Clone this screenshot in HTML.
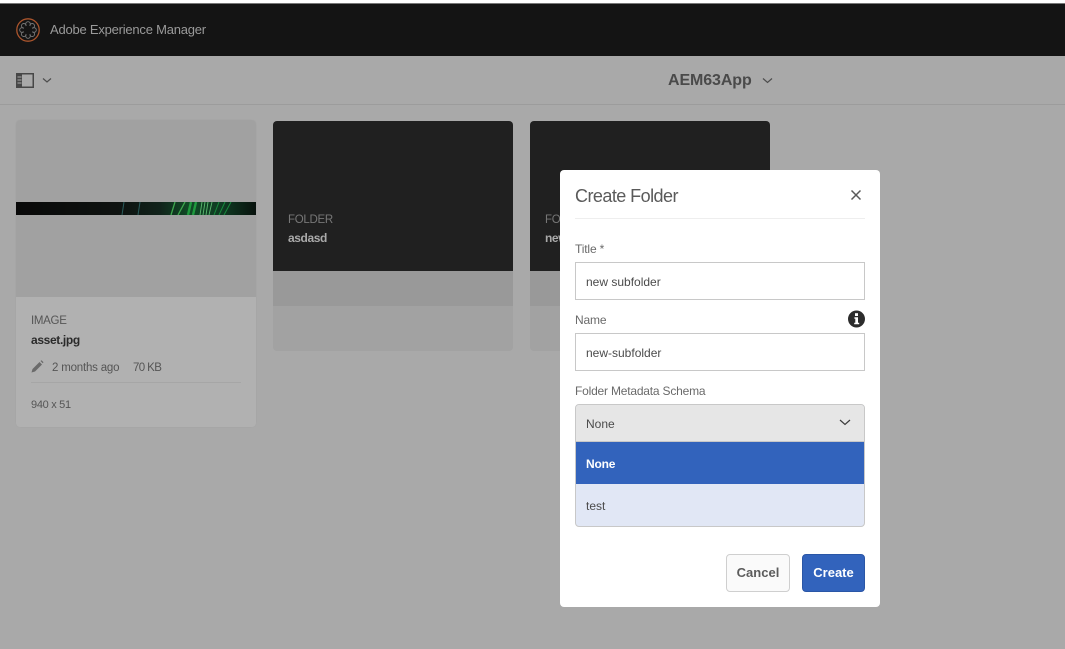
<!DOCTYPE html>
<html>
<head>
<meta charset="utf-8">
<style>
html,body{margin:0;padding:0;}
body{width:1065px;height:649px;overflow:hidden;position:relative;background:#a9a9a9;font-family:"Liberation Sans",sans-serif;}
div,span{position:absolute;white-space:nowrap;box-sizing:border-box;}
svg{position:absolute;display:block;}
.t{line-height:16px;}
</style>
</head>
<body>
<div style="left:0;top:0;width:1065px;height:3px;background:#fff"></div>
<div style="left:0;top:3px;width:1065px;height:1px;background:#777"></div>
<div style="left:0;top:4px;width:1065px;height:52px;background:#141414"></div>
<svg style="left:15px;top:17px" width="26" height="26" viewBox="0 0 26 26" fill="none">
<circle cx="13" cy="13" r="11.2" stroke="#a9542c" stroke-width="1.3"/>
<g stroke="#7a7a7a" stroke-width=".9">
<circle cx="13" cy="7" r="2.3"/><circle cx="17.2" cy="8.8" r="2.3"/><circle cx="19" cy="13" r="2.3"/><circle cx="17.2" cy="17.2" r="2.3"/><circle cx="13" cy="19" r="2.3"/><circle cx="8.8" cy="17.2" r="2.3"/><circle cx="7" cy="13" r="2.3"/><circle cx="8.8" cy="8.8" r="2.3"/>
</g>
<circle cx="13" cy="13" r="4.6" fill="#141414"/>
</svg>
<div class="t" style="left:50px;top:22px;font-size:13px;color:#9a9a9a;letter-spacing:-.22px">Adobe Experience Manager</div>

<div style="left:0;top:104px;width:1065px;height:1px;background:#9c9c9c"></div>
<svg style="left:16px;top:73px" width="38" height="16" viewBox="0 0 38 16" fill="none">
<rect x="0.75" y="0.75" width="16.5" height="13.5" fill="#a9a9a9" stroke="#474747" stroke-width="1.5"/>
<rect x="1" y="1" width="5" height="13" fill="#474747"/>
<path d="M1.5 4h4M1.5 7h4M1.5 10h4" stroke="#a9a9a9" stroke-width="1"/>
<path d="M27 5.5l4 3.5 4-3.5" stroke="#4d4d4d" stroke-width="1.2"/>
</svg>
<div class="t" style="left:668px;top:72px;font-size:16px;font-weight:bold;color:#4a4a4a;line-height:18px;letter-spacing:-.1px">AEM63App</div>
<svg style="left:761px;top:76px" width="14" height="10" viewBox="0 0 14 10" fill="none"><path d="M2 2.5l4.5 4 4.5-4" stroke="#4d4d4d" stroke-width="1.2"/></svg>

<!-- card 1 -->
<div style="left:16px;top:120px;width:240px;height:307px;background:#b1b1b1;border-radius:4px;box-shadow:0 0 1px #9e9e9e"></div>
<div style="left:16px;top:120px;width:240px;height:177px;background:#a1a1a1;border-radius:4px 4px 0 0"></div>
<svg style="left:16px;top:202px" width="240" height="13" viewBox="0 0 240 13">
<defs><linearGradient id="g" x1="0" x2="1" y1="0" y2="0">
<stop offset="0" stop-color="#090909"/><stop offset=".42" stop-color="#0e1210"/><stop offset=".6" stop-color="#10221a"/><stop offset=".72" stop-color="#114a26"/><stop offset=".86" stop-color="#0f3a22"/><stop offset="1" stop-color="#08120d"/></linearGradient></defs>
<rect width="240" height="13" fill="url(#g)"/>
<path d="M106 13l2-13M122 13l2-13" stroke="#2a5c5c" stroke-width="1" fill="none"/>
<path d="M155 13l4-13M162 13l7-13" stroke="#3fa84e" stroke-width="1.3" fill="none"/>
<path d="M172 13l3-13M177 13l3-13" stroke="#1f9a3e" stroke-width="2.4" fill="none"/>
<path d="M184 13l2-13M187 13l2-13M190 13l2-13M193 13l3-13" stroke="#5cb870" stroke-width=".9" fill="none"/>
<path d="M198 13l5-13M203 13l6-13M208 13l7-13" stroke="#178a3c" stroke-width="1" fill="none"/>
</svg>
<div class="t" style="left:31px;top:313px;font-size:11.5px;color:#555;letter-spacing:-.3px">IMAGE</div>
<div class="t" style="left:31px;top:332px;font-size:12px;font-weight:bold;color:#2a2a2a;letter-spacing:-.35px">asset.jpg</div>
<svg style="left:31px;top:360px" width="13" height="13" viewBox="0 0 13 13"><path d="M0.5 12.5l1-3.5 7-7 2.5 2.5-7 7zM9.5 1l1-.8 2 2-.8 1z" fill="#6a6a6a"/></svg>
<div class="t" style="left:52px;top:360px;font-size:11.5px;color:#555;letter-spacing:-.2px">2 months ago</div>
<div class="t" style="left:133px;top:360px;font-size:11.5px;color:#555;letter-spacing:-.6px">70 KB</div>
<div style="left:31px;top:382px;width:210px;height:1px;background:#a6a6a6"></div>
<div class="t" style="left:31px;top:397px;font-size:11px;color:#555;letter-spacing:-.3px">940 x 51</div>

<!-- card 2 -->
<div style="left:273px;top:121px;width:240px;height:230px;background:#a2a2a2;border-radius:4px"></div>
<div style="left:273px;top:271px;width:240px;height:35px;background:#999"></div>
<div style="left:273px;top:121px;width:240px;height:150px;background:#202020;border-radius:4px 4px 0 0"></div>
<div class="t" style="left:288px;top:212px;font-size:11.5px;color:#777;letter-spacing:-.3px">FOLDER</div>
<div class="t" style="left:288px;top:230px;font-size:12px;font-weight:bold;color:#aaa;letter-spacing:-.4px">asdasd</div>

<!-- card 3 -->
<div style="left:530px;top:121px;width:240px;height:230px;background:#a2a2a2;border-radius:4px"></div>
<div style="left:530px;top:271px;width:240px;height:35px;background:#999"></div>
<div style="left:530px;top:121px;width:240px;height:150px;background:#202020;border-radius:4px 4px 0 0"></div>
<div class="t" style="left:545px;top:212px;font-size:11.5px;color:#777;letter-spacing:-.3px">FOLDER</div>
<div class="t" style="left:545px;top:230px;font-size:12px;font-weight:bold;color:#aaa;letter-spacing:-.4px">new</div>

<!-- dialog -->
<div style="left:560px;top:170px;width:320px;height:437px;background:#fff;border-radius:4px"></div>
<div class="t" style="left:575px;top:185px;font-size:18px;line-height:22px;color:#5a5a5a;letter-spacing:-.55px">Create Folder</div>
<svg style="left:849px;top:188px" width="14" height="14" viewBox="0 0 14 14"><path d="M2.5 2.5l9 9M11.5 2.5l-9 9" stroke="#5a5a5a" stroke-width="1.5" fill="none"/></svg>
<div style="left:575px;top:218px;width:290px;height:1px;background:#eee"></div>

<div class="t" style="left:575px;top:241px;font-size:12px;color:#6a6a6a;letter-spacing:-.15px">Title *</div>
<div style="left:575px;top:262px;width:290px;height:38px;background:#fff;border:1px solid #c8c8c8"></div>
<div class="t" style="left:586px;top:274px;font-size:12px;color:#4b4b4b">new subfolder</div>

<div class="t" style="left:575px;top:312px;font-size:12px;color:#6a6a6a;letter-spacing:-.15px">Name</div>
<svg style="left:848px;top:310px" width="18" height="18" viewBox="0 0 18 18"><circle cx="8.5" cy="9" r="8.5" fill="#2c2c2c"/><rect x="7" y="3.2" width="3" height="2.8" fill="#fff"/><path d="M6.4 7.2h3.6v5.6h1.2v1.5H6.2v-1.5h1.1V8.7H6.4z" fill="#fff"/></svg>
<div style="left:575px;top:333px;width:290px;height:38px;background:#fff;border:1px solid #c8c8c8"></div>
<div class="t" style="left:586px;top:345px;font-size:12px;color:#4b4b4b">new-subfolder</div>

<div class="t" style="left:575px;top:383px;font-size:12px;color:#6a6a6a;letter-spacing:-.2px">Folder Metadata Schema</div>
<div style="left:575px;top:404px;width:290px;height:123px;background:#e1e7f5;border:1px solid #c8c8c8;border-radius:4px"></div>
<div style="left:576px;top:405px;width:288px;height:37px;background:#e6e6e6;border-radius:3px 3px 0 0"></div>
<div style="left:575px;top:441px;width:290px;height:1px;background:#c8c8c8"></div>
<div class="t" style="left:586px;top:416px;font-size:12px;color:#4b4b4b">None</div>
<svg style="left:838px;top:418px" width="14" height="10" viewBox="0 0 14 10"><path d="M2 2l5 4.5L12 2" stroke="#3c3c3c" stroke-width="1.2" fill="none"/></svg>
<div style="left:576px;top:442px;width:288px;height:42px;background:#3263bc"></div>
<div class="t" style="left:586px;top:456px;font-size:12px;font-weight:bold;color:#fff;letter-spacing:-.2px">None</div>
<div class="t" style="left:586px;top:498px;font-size:12px;color:#4b4b4b">test</div>

<div style="left:726px;top:554px;width:64px;height:38px;background:#fafafa;border:1px solid #cfcfcf;border-radius:4px"></div>
<div class="t" style="left:726px;top:565px;width:64px;text-align:center;font-size:13px;font-weight:bold;color:#5c5c5c">Cancel</div>
<div style="left:802px;top:554px;width:63px;height:38px;background:#3263bc;border:1px solid #2a56a6;border-radius:4px"></div>
<div class="t" style="left:802px;top:565px;width:63px;text-align:center;font-size:13px;font-weight:bold;color:#fff">Create</div>
</body>
</html>
